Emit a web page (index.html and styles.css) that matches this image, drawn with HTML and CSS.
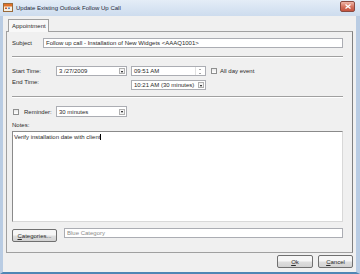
FILE: index.html
```html
<!doctype html>
<html>

<head>

    <link rel="stylesheet" href="styles.css">

</head>

<body>

    <div class="window">

        <div class="titleBar">
            <svg class="titleIcon" width="10" height="9" viewBox="0 0 10 9">
                <rect x="0.5" y="0.5" width="9" height="8" fill="#f4f0e4" stroke="#9a6a3a"/>
                <rect x="1" y="1" width="8" height="2.5" fill="#e0702a"/>
                <rect x="2" y="4.5" width="2" height="1.5" fill="#c85a2a"/>
                <rect x="5" y="4.5" width="2" height="1.5" fill="#6a8ac0"/>
            </svg>
            <span class="titleText">Update Existing Outlook Follow Up Call</span>
            <div class="closeButton">
                <svg width="6" height="5" viewBox="0 0 6 5">
                    <path d="M0.5 0.5 L5.5 4.5 M5.5 0.5 L0.5 4.5" stroke="#ffffff" stroke-width="1.3"/>
                </svg>
            </div>
        </div>

        <div class="client">

            <div class="tabStrip">
                <div class="tab">Appointment</div>
            </div>

            <div class="panel">

                <div class="row subjectRow">
                    <span class="label subjectLabel">Subject</span>
                    <div class="textBox subjectBox">Follow up call - Installation of New Widgets &lt;AAAQ1001&gt;</div>
                </div>

                <div class="separator sepOne"></div>

                <div class="row startRow">
                    <span class="label timeLabel">Start Time:</span>
                    <div class="textBox dropBox dateBox">
                        <span>3 /27/2009</span>
                        <span class="dropArrow"></span>
                    </div>
                    <div class="textBox dropBox timeBox">
                        <span>09:51 AM</span>
                        <span class="spinner">
                            <span class="spinUp"></span>
                            <span class="spinDown"></span>
                        </span>
                    </div>
                    <span class="checkBox allDayCheck"></span>
                    <span class="label">All day event</span>
                </div>

                <div class="row endRow">
                    <span class="label timeLabel endLabel">End Time:</span>
                    <div class="textBox dropBox endBox">
                        <span>10:21 AM (30 minutes)</span>
                        <span class="dropArrow"></span>
                    </div>
                </div>

                <div class="separator sepTwo"></div>

                <div class="row reminderRow">
                    <span class="checkBox reminderCheck"></span>
                    <span class="label reminderLabel">Reminder:</span>
                    <div class="textBox dropBox reminderBox">
                        <span>30 minutes</span>
                        <span class="dropArrow"></span>
                    </div>
                </div>

                <div class="label notesLabel">Notes:</div>
                <div class="notesBox">Verify installation date with client<span class="caret"></span></div>

                <div class="row categoryRow">
                    <div class="button categoriesButton"><span class="underline">C</span>ategories...</div>
                    <div class="textBox categoryBox">Blue Category</div>
                </div>

            </div>

            <div class="buttonRow">
                <div class="button okButton"><span class="underline">O</span>k</div>
                <div class="button cancelButton"><span class="underline">C</span>ancel</div>
            </div>

        </div>

    </div>

</body>

</html>
```

FILE: styles.css
```css
body {
    margin: 0;
    font-family: "Liberation Sans", Arial, sans-serif;
    font-size: 6px;
    color: #2a2a2a;
}

.window {
    width: 360px;
    height: 274px;
    box-sizing: border-box;
    background: linear-gradient(#dbe6f3, #c5d6ea);
    border-left: 3px solid #b9cce3;
    border-right: 4px solid #b9cce3;
    border-bottom: 2px solid #4f86b4;
    display: flex;
    flex-direction: column;
}

.titleBar {
    height: 16px;
    display: flex;
    align-items: center;
    background: linear-gradient(#e4edf7, #cddcee);
    margin-left: -3px;
    margin-right: -4px;
    padding-left: 3px;
    padding-right: 4px;
}

.titleIcon {
    margin-top: -1px;
}

.titleText {
    margin-left: 3px;
    font-size: 6px;
    color: #1e2a3a;
    flex: 1;
}

.closeButton {
    width: 13px;
    height: 9px;
    margin-top: -4px;
    margin-right: 1px;
    border: 1px solid #8a4a40;
    border-radius: 2px;
    background: linear-gradient(#f0b6a8, #d4705c 55%, #c65440);
    display: flex;
    align-items: center;
    justify-content: center;
}

.client {
    flex: 1;
    background: #f0f0f0;
    display: flex;
    flex-direction: column;
}

.tabStrip {
    height: 15px;
    display: flex;
    align-items: flex-end;
    padding-left: 5px;
}

.tab {
    height: 13px;
    box-sizing: border-box;
    width: 41px;
    border: 1px solid #a0a0a0;
    border-bottom: none;
    background: #f8f8f8;
    padding-top: 3px;
    padding-left: 3px;
    margin-bottom: -1px;
    position: relative;
    z-index: 1;
}

.panel {
    margin-left: 3px;
    width: 347px;
    height: 222px;
    box-sizing: border-box;
    border: 1px solid #a0a0a0;
    border-right: 1px solid #808080;
    padding-left: 5px;
    padding-right: 9px;
    display: flex;
    flex-direction: column;
}

.row {
    display: flex;
    align-items: center;
}

.label {
    white-space: nowrap;
}

.textBox {
    box-sizing: border-box;
    height: 10px;
    background: #ffffff;
    border: 1px solid #abadb3;
    padding-left: 2px;
    display: flex;
    align-items: center;
    white-space: nowrap;
}

.subjectRow {
    margin-top: 6px;
}

.subjectLabel {
    width: 31px;
}

.subjectBox {
    flex: 1;
}

.separator {
    height: 1px;
    background: #a0a0a0;
    border-bottom: 1px solid #ffffff;
}

.sepOne {
    margin-top: 8px;
}

.sepTwo {
    margin-top: 6px;
}

.startRow {
    margin-top: 8px;
}

.timeLabel {
    width: 44px;
}

.dropBox {
    justify-content: space-between;
    padding-right: 1px;
}

.dropArrow {
    width: 6px;
    height: 6px;
    box-sizing: border-box;
    border: 1px solid #b0b0b0;
    background: #f4f4f4;
    position: relative;
}

.dropArrow::after {
    content: "";
    position: absolute;
    left: 1px;
    top: 1.5px;
    border-left: 1.5px solid transparent;
    border-right: 1.5px solid transparent;
    border-top: 2px solid #000000;
}

.dateBox {
    width: 71px;
}

.timeBox {
    width: 75px;
    margin-left: 4px;
}

.spinner {
    width: 8px;
    height: 8px;
    display: flex;
    flex-direction: column;
    align-items: center;
    justify-content: space-around;
    border-left: 1px solid #e0e0e0;
}

.spinUp {
    border-left: 1.5px solid transparent;
    border-right: 1.5px solid transparent;
    border-bottom: 1.5px solid #555555;
}

.spinDown {
    border-left: 1.5px solid transparent;
    border-right: 1.5px solid transparent;
    border-top: 1.5px solid #555555;
}

.checkBox {
    width: 6px;
    height: 6px;
    box-sizing: border-box;
    border: 1px solid #8e8f8f;
    background: linear-gradient(#e8e8e8, #ffffff);
}

.allDayCheck {
    margin-left: 5px;
    margin-right: 3px;
}

.endRow {
    margin-top: 4px;
}

.endLabel {
    width: 119px;
    margin-top: -7px;
}

.endBox {
    width: 75px;
}

.reminderRow {
    margin-top: 8px;
}

.reminderCheck {
    margin-left: 1px;
    margin-right: 5px;
}

.reminderLabel {
    width: 32px;
}

.reminderBox {
    width: 71px;
    height: 11px;
}

.notesLabel {
    margin-top: 5px;
    height: 9px;
}

.notesBox {
    height: 91px;
    box-sizing: border-box;
    background: #ffffff;
    border: 1px solid #d8d8d8;
    border-top: 1px solid #8a8a8a;
    border-left: 1px solid #8a8a8a;
    padding: 2px 1px;
}

.caret {
    display: inline-block;
    width: 1px;
    height: 6px;
    background: #000000;
    vertical-align: -1px;
}

.categoryRow {
    margin-top: 6px;
    align-items: flex-start;
}

.button {
    box-sizing: border-box;
    height: 13px;
    border: 1px solid #707070;
    border-radius: 2px;
    background: linear-gradient(#f6f6f6 45%, #dedede 55%, #d2d2d2);
    display: flex;
    align-items: center;
    justify-content: center;
}

.underline {
    text-decoration: underline;
}

.categoriesButton {
    width: 45px;
    margin-top: 1px;
}

.categoryBox {
    flex: 1;
    margin-left: 7px;
    color: #8c8c8c;
}

.buttonRow {
    display: flex;
    justify-content: flex-end;
    padding-right: 3px;
    margin-top: 2px;
}

.okButton {
    width: 36px;
}

.cancelButton {
    width: 35px;
    margin-left: 5px;
}
```
